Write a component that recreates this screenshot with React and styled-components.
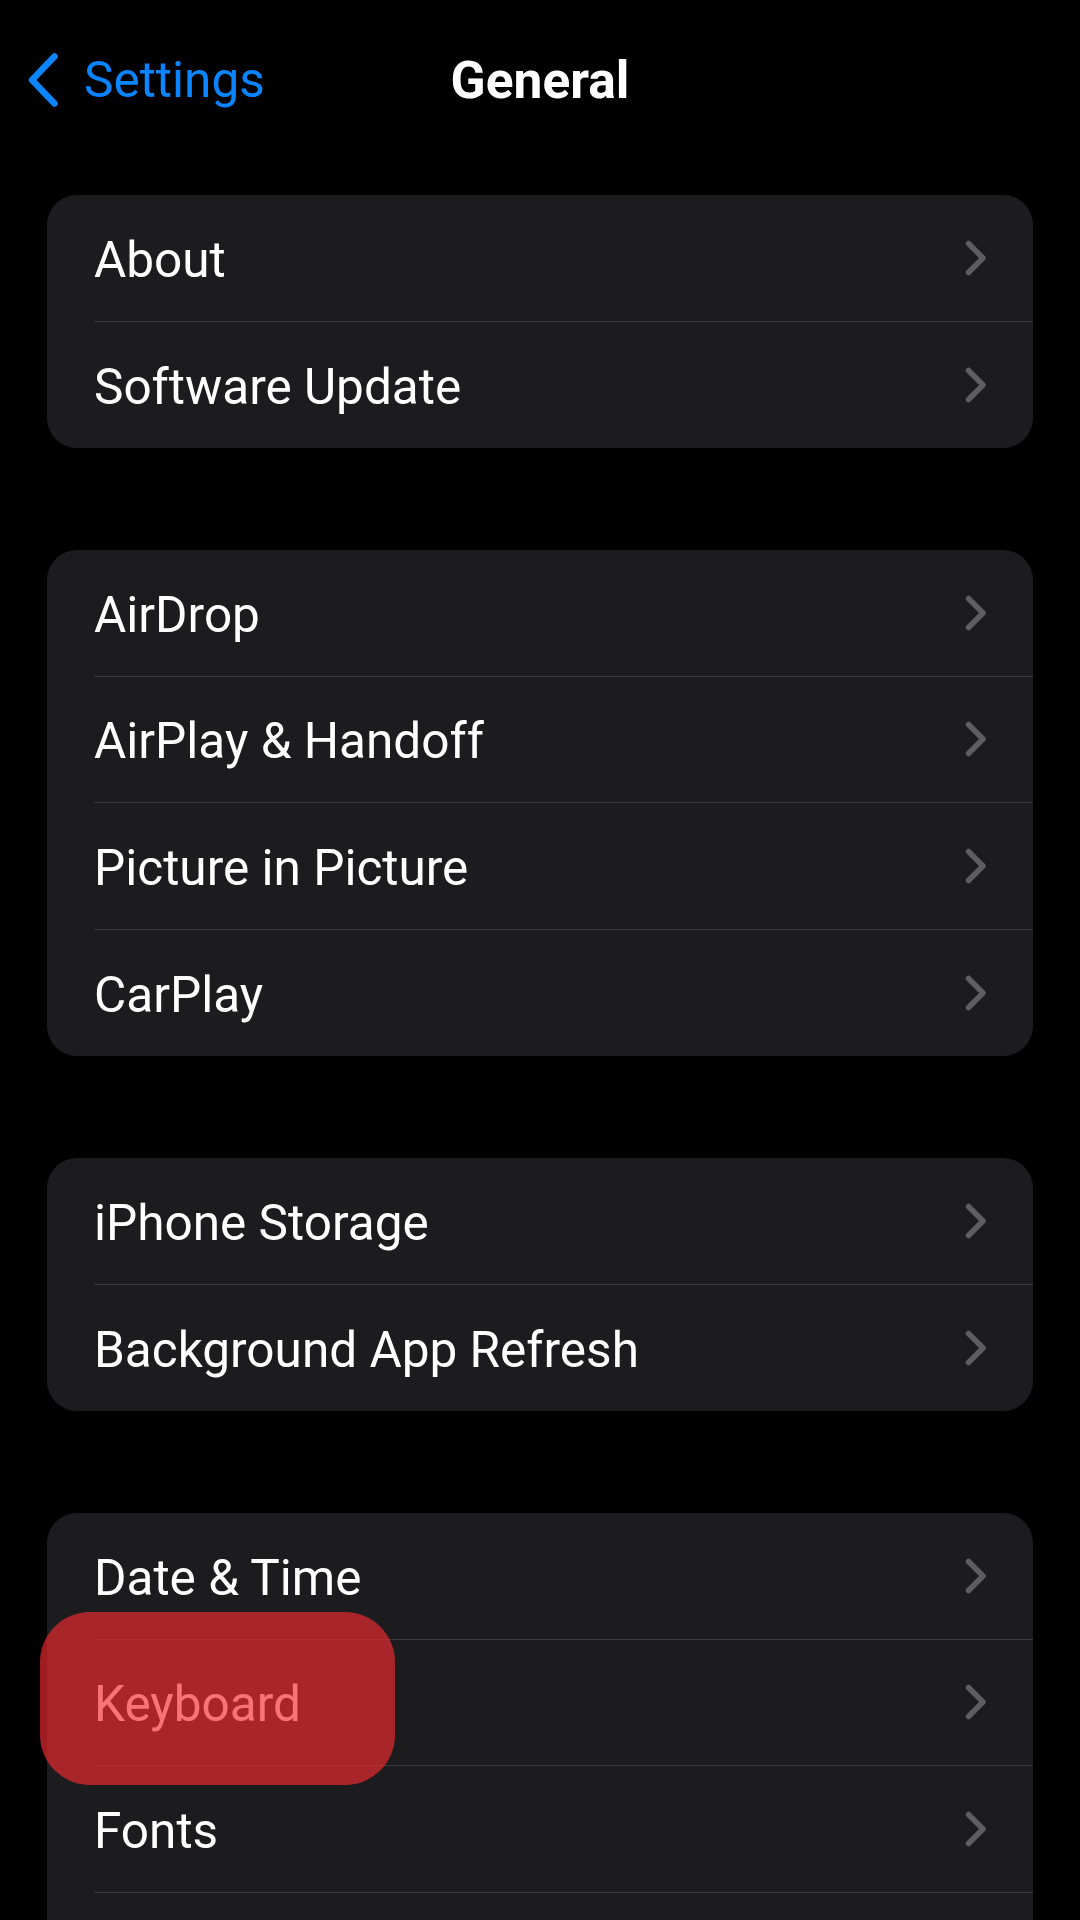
import React from "react";
import styled, { createGlobalStyle } from "styled-components";

const GlobalStyle = createGlobalStyle`
  html, body {
    margin: 0;
    padding: 0;
    background: #000;
  }
  body {
    font-family: Roboto, "Liberation Sans", Arial, sans-serif;
    -webkit-font-smoothing: antialiased;
  }
`;

const Screen = styled.div`
  width: 1080px;
  height: 1920px;
  overflow: hidden;
  background: #000;
`;

const NavBar = styled.header`
  height: 160px;
  display: grid;
  grid-template-columns: 1fr auto 1fr;
  align-items: center;
`;

const BackButton = styled.button`
  justify-self: start;
  display: flex;
  align-items: center;
  gap: 25px;
  margin: 0;
  padding: 0 0 0 28px;
  border: none;
  background: none;
  color: #0a84ff;
  font-family: Roboto, "Liberation Sans", Arial, sans-serif;
  font-size: 49.5px;
  font-weight: 400;
  cursor: pointer;
`;

const Title = styled.h1`
  margin: 0;
  color: #fff;
  font-size: 51.5px;
  font-weight: 700;
`;

const Groups = styled.main`
  display: flex;
  flex-direction: column;
  gap: 102px;
  padding: 35px 47px 0;
`;

const Group = styled.ul`
  list-style: none;
  margin: 0;
  padding: 0;
  background: #1c1c1e;
  border-radius: 30px;
`;

const Row = styled.li`
  position: relative;
  display: flex;
  height: 126.5px;
  padding-left: 47px;
  cursor: pointer;
`;

const RowBody = styled.div`
  flex: 1;
  display: flex;
  align-items: center;
  justify-content: space-between;
  padding-right: 46px;
  border-bottom: ${(p) => (p.$divider ? "1px solid #38383a" : "none")};
`;

const Label = styled.span`
  padding-top: 4px;
  color: #fff;
  font-size: 49.5px;
  font-weight: 400;
`;

// red marker drawn over the screenshot
const Highlight = styled.span`
  position: absolute;
  left: -7px;
  top: -28px;
  width: 355px;
  height: 173px;
  border-radius: 50px;
  background: rgba(242, 44, 48, 0.66);
  pointer-events: none;
`;

const BackChevron = () => (
  <svg width="31" height="54" viewBox="0 0 31 54" fill="none">
    <path
      d="M26.5 3.5 L4 27 L26.5 50.5"
      stroke="#0a84ff"
      strokeWidth="6.5"
      strokeLinecap="round"
      strokeLinejoin="round"
    />
  </svg>
);

const Chevron = () => (
  <svg width="23" height="36" viewBox="0 0 23 36" fill="none">
    <path
      d="M4.5 3.5 L19 18 L4.5 32.5"
      stroke="#5e5e62"
      strokeWidth="5.5"
      strokeLinecap="round"
      strokeLinejoin="round"
    />
  </svg>
);

// last group runs on past the bottom of the screen
const groups = [
  { items: ["About", "Software Update"] },
  { items: ["AirDrop", "AirPlay & Handoff", "Picture in Picture", "CarPlay"] },
  { items: ["iPhone Storage", "Background App Refresh"] },
  { items: ["Date & Time", "Keyboard", "Fonts"], continues: true },
];

const marked = "Keyboard";

export default function App() {
  return (
    <Screen>
      <GlobalStyle />
      <NavBar>
        <BackButton>
          <BackChevron />
          Settings
        </BackButton>
        <Title>General</Title>
      </NavBar>
      <Groups>
        {groups.map((group, gi) => (
          <Group key={gi}>
            {group.items.map((item, i) => (
              <Row key={item}>
                <RowBody $divider={group.continues || i < group.items.length - 1}>
                  <Label>{item}</Label>
                  <Chevron />
                </RowBody>
                {item === marked && <Highlight />}
              </Row>
            ))}
            {group.continues && <Row />}
          </Group>
        ))}
      </Groups>
    </Screen>
  );
}
